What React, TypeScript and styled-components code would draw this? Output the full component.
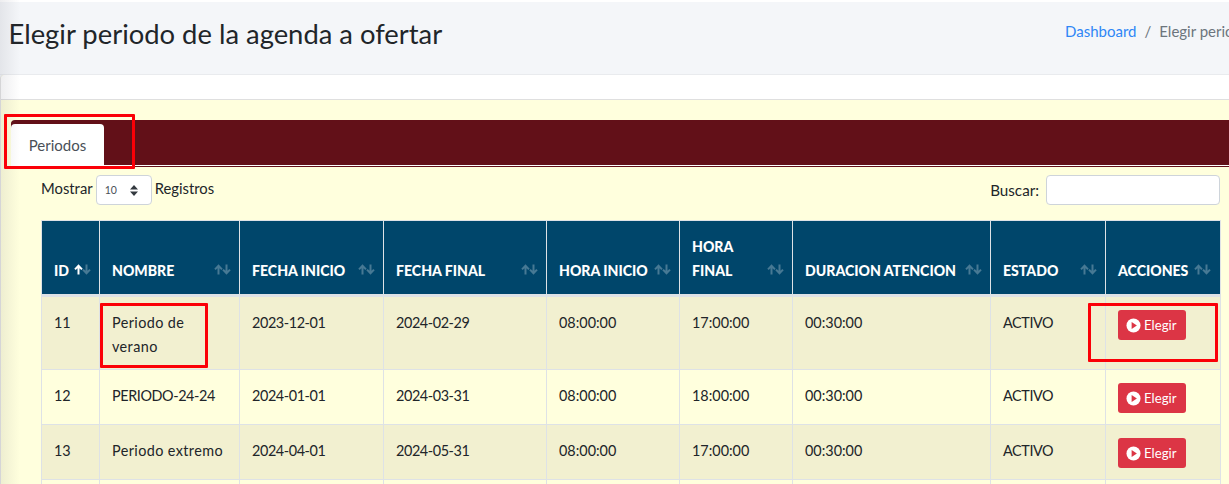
import React from "react";
import styled, { createGlobalStyle } from "styled-components";

const Global = createGlobalStyle`
  html, body { margin: 0; padding: 0; background: #f4f6f9; overflow: hidden; }
  body { font-family: "Lato", "Noto Sans", "Liberation Sans", sans-serif; color: #212529; }
  * { box-sizing: border-box; }
`;

const Page = styled.div`
  position: relative;
  display: flex;
  flex-direction: column;
  width: 1229px;
  height: 484px;
  overflow: hidden;
  background: #f4f6f9;
  &::after {
    content: "";
    position: absolute;
    inset: 0 auto 0 0;
    width: 20px;
    background: linear-gradient(90deg, rgba(60, 60, 80, 0.09), rgba(60, 60, 80, 0));
    pointer-events: none;
  }
`;
const Header = styled.header`
  display: flex;
  justify-content: space-between;
  flex: none;
  height: 75px;
  padding: 15px 0 0 8.5px;
  border-top: 2px solid #fff;
  border-bottom: 1px solid #e9ebee;
`;
const Title = styled.h1`
  margin: 0;
  font-size: 27.4px;
  font-weight: 400;
  line-height: 34px;
  color: #212529;
  white-space: nowrap;
`;
const Crumbs = styled.nav`
  display: flex;
  gap: 8px;
  width: 164px;
  flex: none;
  overflow: hidden;
  white-space: nowrap;
  padding-top: 5px;
  font-size: 15px;
  line-height: 18px;
  color: #6c757d;
`;
const CrumbLink = styled.a`
  color: #2f86f6;
`;
const Card = styled.section`
  flex: 1;
  background: #ffffdd;
  border-left: 1px solid #e4e4e4;
  border-radius: 4px 0 0 0;
`;
const CardHead = styled.div`
  height: 25px;
  background: #fff;
  border-bottom: 1px solid #dfdfdf;
  border-radius: 4px 0 0 0;
`;
const CardBody = styled.div`
  padding-top: 20px;
`;
const TabBar = styled.div`
  display: flex;
  align-items: flex-end;
  height: 46px;
  margin-left: 10px;
  background: #621018;
  border-bottom: 1px solid #fff;
  border-radius: 4px 0 0 0;
  box-shadow: 0 1px 0 #621018;
`;
const Tab = styled.div`
  width: 93px;
  height: 41px;
  padding-top: 10px;
  background: #fff;
  border-radius: 4px 4px 0 0;
  text-align: center;
  font-size: 15px;
  line-height: 22px;
  color: #495057;
`;
const Content = styled.div`
  padding: 9px 9px 0 40px;
`;
const Controls = styled.div`
  display: flex;
  justify-content: space-between;
  height: 45px;
`;
const LengthLabel = styled.div`
  display: flex;
  align-items: flex-start;
  gap: 3px;
  font-size: 14.8px;
  line-height: 27px;
  color: #212529;
`;
const SelectBox = styled.div`
  display: flex;
  align-items: center;
  justify-content: space-between;
  width: 56px;
  height: 30px;
  padding: 0 13px 0 8px;
  background: #fff;
  border: 1px solid #ced4da;
  border-radius: 4px;
  font-size: 10.5px;
  color: #495057;
`;
const SearchLabel = styled.div`
  display: flex;
  gap: 7px;
  font-size: 15.2px;
  line-height: 30px;
`;
const SearchInput = styled.input`
  width: 174px;
  height: 30px;
  background: #fff;
  border: 1px solid #ced4da;
  border-radius: 4px;
`;
const Table = styled.table`
  width: 1179px;
  table-layout: fixed;
  border-collapse: collapse;
  font-size: 14.4px;
`;
const Th = styled.th`
  position: relative;
  height: 75px;
  padding: 0 24px 11px 12px;
  background: #00466b;
  border: 1px solid #dee2e6;
  border-bottom: 3px solid #dee2e6;
  text-align: left;
  vertical-align: bottom;
  color: #fff;
  font-size: 14.1px;
  font-weight: 900;
  line-height: 24px;
`;
const SortIcon = styled.span<{ $right: number }>`
  position: absolute;
  right: ${(p) => p.$right}px;
  bottom: 19px;
  display: flex;
  color: #fff;
`;
const Row = styled.tr<{ $odd: boolean }>`
  background: ${(p) => (p.$odd ? "#f2f0d0" : "#ffffdd")};
`;
const Td = styled.td<{ $tracking?: number }>`
  height: 55px;
  padding: 14px 12px 10px 12px;
  border: 1px solid #dee2e6;
  vertical-align: top;
  line-height: 24px;
  color: #212529;
  white-space: pre-line;
  letter-spacing: ${(p) => p.$tracking ?? 0}px;
`;
const Button = styled.button`
  display: flex;
  align-items: center;
  gap: 3px;
  height: 30px;
  width: 68px;
  margin-top: -1px;
  padding: 0 0 0 8px;
  background: #dc3545;
  border: 0;
  border-radius: 3px;
  color: #fff;
  font: 400 13.2px "Lato", sans-serif;
`;
const Mark = styled.div<{ $x: number; $y: number; $w: number; $h: number }>`
  position: absolute;
  z-index: 2;
  left: ${(p) => p.$x}px;
  top: ${(p) => p.$y}px;
  width: ${(p) => p.$w}px;
  height: ${(p) => p.$h}px;
  border: 3px solid #fb0007;
  border-radius: 1px;
`;

const Sort = ({ up }: { up?: boolean }) => (
  <svg width="17" height="11" viewBox="0 0 17 11">
    <g fill="none" stroke="currentColor" strokeWidth="2">
      <path d="M4.5 10.5V2M1 5.4 4.5 1.8 8 5.4" opacity={up ? 1 : 0.28} />
      <path d="M12.5 .5V9M9 5.6l3.5 3.6L16 5.6" opacity="0.28" />
    </g>
  </svg>
);

const Play = () => (
  <svg width="15" height="15" viewBox="0 0 16 16">
    <circle cx="8" cy="8" r="7.5" fill="#fff" />
    <path d="M6 4.3 11.6 8 6 11.7Z" fill="#dc3545" />
  </svg>
);

const Caret = () => (
  <svg width="8" height="11" viewBox="0 0 8 11" fill="#343a40">
    <path d="M4 0 8 4.4H0ZM4 11 0 6.6H8Z" />
  </svg>
);

const cols = [
  { t: "ID", w: 58, r: 8, up: true },
  { t: "NOMBRE", w: 140, r: 8 },
  { t: "FECHA INICIO", w: 144, r: 8 },
  { t: "FECHA FINAL", w: 163, r: 8 },
  { t: "HORA INICIO", w: 133, r: 8 },
  { t: "HORA FINAL", w: 113, r: 8 },
  { t: "DURACION ATENCION", w: 198, r: 8 },
  { t: "ESTADO", w: 115, r: 8 },
  { t: "ACCIONES", w: 115, r: 9 },
];

const rows = [
  ["11", "Periodo de\nverano", "2023-12-01", "2024-02-29", "08:00:00", "17:00:00", "00:30:00", "ACTIVO"],
  ["12", "PERIODO-24-24", "2024-01-01", "2024-03-31", "08:00:00", "18:00:00", "00:30:00", "ACTIVO"],
  ["13", "Periodo extremo", "2024-04-01", "2024-05-31", "08:00:00", "17:00:00", "00:30:00", "ACTIVO"],
];

const trackingOf = (v: string) => {
  if (/^\d{4}-/.test(v) || v === "ACTIVO" || v.startsWith("PERIODO")) return -0.4;
  if (v.startsWith("Periodo")) return 0.4;
  return 0;
};

export default function App() {
  return (
    <Page>
      <Global />
      <Header>
        <Title>Elegir periodo de la agenda a ofertar</Title>
        <Crumbs>
          <CrumbLink>Dashboard</CrumbLink>
          <span>/</span>
          <span>Elegir periodo</span>
        </Crumbs>
      </Header>
      <Card>
        <CardHead />
        <CardBody>
          <TabBar>
            <Tab>Periodos</Tab>
          </TabBar>
          <Content>
            <Controls>
              <LengthLabel>
                Mostrar
                <SelectBox>
                  10
                  <Caret />
                </SelectBox>
                Registros
              </LengthLabel>
              <SearchLabel>
                Buscar:
                <SearchInput />
              </SearchLabel>
            </Controls>
            <Table>
              <colgroup>
                {cols.map((c) => (
                  <col key={c.t} width={c.w} />
                ))}
              </colgroup>
              <thead>
                <tr>
                  {cols.map((c) => (
                    <Th key={c.t}>
                      {c.t}
                      <SortIcon $right={c.r}>
                        <Sort up={c.up} />
                      </SortIcon>
                    </Th>
                  ))}
                </tr>
              </thead>
              <tbody>
                {rows.map((r, i) => (
                  <Row key={r[0]} $odd={i % 2 === 0}>
                    {r.map((v, j) => (
                      <Td key={j} $tracking={trackingOf(v)}>
                        {v}
                      </Td>
                    ))}
                    <Td>
                      <Button>
                        <Play />
                        Elegir
                      </Button>
                    </Td>
                  </Row>
                ))}
                <Row $odd={false}>
                  {cols.map((c) => (
                    <Td key={c.t} />
                  ))}
                </Row>
              </tbody>
            </Table>
          </Content>
        </CardBody>
      </Card>
      <Mark $x={4} $y={114} $w={131} $h={55} />
      <Mark $x={100} $y={303} $w={108} $h={65} />
      <Mark $x={1088} $y={303} $w={130} $h={59} />
    </Page>
  );
}
